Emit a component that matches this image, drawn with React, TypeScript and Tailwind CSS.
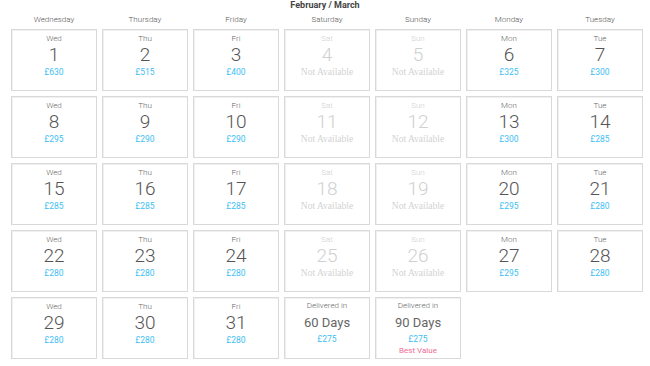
type Cell =
  | { kind: "day"; short: string; date: number; price?: string }
  | { kind: "delivery"; days: number; price: string; best?: boolean };

const dayNames = ["Wednesday", "Thursday", "Friday", "Saturday", "Sunday", "Monday", "Tuesday"];
const shorts = ["Wed", "Thu", "Fri", "Sat", "Sun", "Mon", "Tue"];

const prices: (string | undefined)[][] = [
  ["£630", "£515", "£400", undefined, undefined, "£325", "£300"],
  ["£295", "£290", "£290", undefined, undefined, "£300", "£285"],
  ["£285", "£285", "£285", undefined, undefined, "£295", "£280"],
  ["£280", "£280", "£280", undefined, undefined, "£295", "£280"],
];

const cells: Cell[] = [];
prices.forEach((row, r) =>
  row.forEach((price, c) => cells.push({ kind: "day", short: shorts[c], date: r * 7 + c + 1, price }))
);
cells.push({ kind: "day", short: "Wed", date: 29, price: "£280" });
cells.push({ kind: "day", short: "Thu", date: 30, price: "£280" });
cells.push({ kind: "day", short: "Fri", date: 31, price: "£280" });
cells.push({ kind: "delivery", days: 60, price: "£275" });
cells.push({ kind: "delivery", days: 90, price: "£275", best: true });

function DayCell({ cell }: { cell: Cell }) {
  if (cell.kind === "delivery") {
    return (
      <div className="flex h-[62px] flex-col items-center border border-[#d9d9d9] pt-[2px] shadow-[inset_1px_1px_0_#f0f0f0]">
        <div className="text-[8px] font-light leading-[12px] text-[#666]">Delivered in</div>
        <div className="mt-[3px] text-[13px] leading-[16px] text-[#666]">{cell.days} Days</div>
        <div className="mt-[2px] text-[8.5px] leading-[12px] text-[#3ec0f4]">{cell.price}</div>
        {cell.best && <div className="text-[8px] leading-[11px] text-[#f26d91]">Best Value</div>}
      </div>
    );
  }
  const available = !!cell.price;
  return (
    <div className="flex h-[62px] flex-col items-center border border-[#d9d9d9] pt-[3px] shadow-[inset_1px_1px_0_#f0f0f0]">
      <div className={`text-[8px] font-light leading-[12px] ${available ? "text-[#666]" : "text-[#d0d0d0]"}`}>
        {cell.short}
      </div>
      <div className={`text-[19px] font-light leading-[20px] ${available ? "text-[#555]" : "text-[#d0d0d0]"}`}>
        {cell.date}
      </div>
      {available ? (
        <div className="mt-[1px] text-[8.5px] leading-[12px] text-[#3ec0f4]">{cell.price}</div>
      ) : (
        <div className="mt-[1px] font-['Liberation_Serif',serif] text-[9.5px] leading-[12px] text-[#d2d2d2]">
          Not Available
        </div>
      )}
    </div>
  );
}

export default function App() {
  return (
    <div className="h-[366px] w-[650px] bg-white font-['Roboto',sans-serif]">
      <div className="text-center text-[9px] font-bold leading-[11px] text-[#444]">February / March</div>
      <div className="px-[11px]">
        <div className="grid grid-cols-[repeat(7,86px)] gap-x-[5px]">
          {dayNames.map((d) => (
            <div key={d} className="h-[18px] pt-[3px] text-center text-[8px] font-light leading-[12px] text-[#555]">
              {d}
            </div>
          ))}
        </div>
        <div className="grid grid-cols-[repeat(7,86px)] gap-[5px]">
          {cells.map((c, i) => (
            <DayCell key={i} cell={c} />
          ))}
        </div>
      </div>
    </div>
  );
}
